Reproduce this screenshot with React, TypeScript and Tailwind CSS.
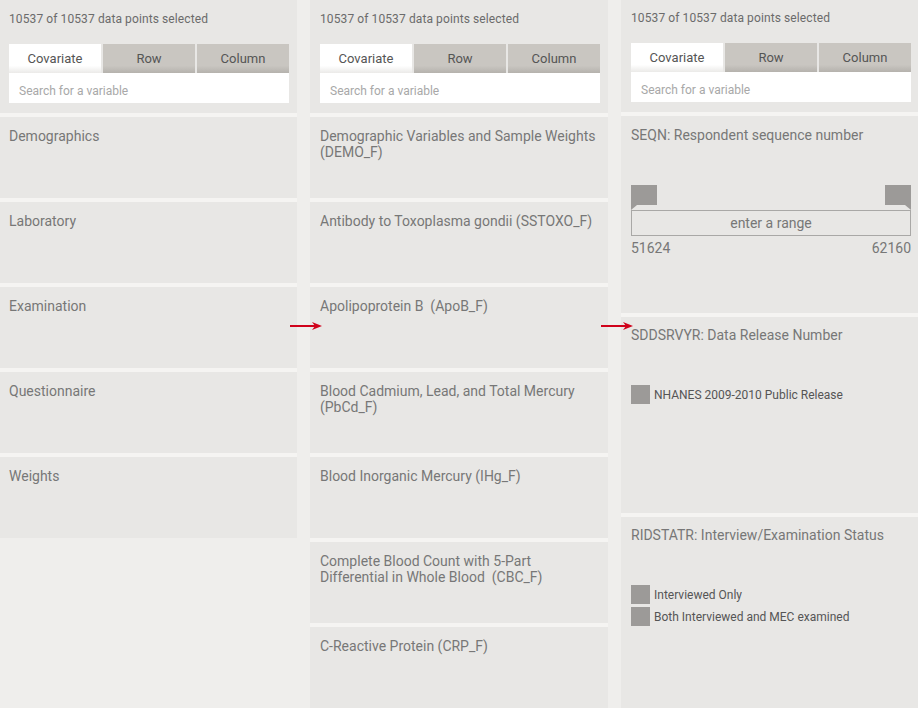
import React from 'react';

const font = { fontFamily: 'Roboto, "Liberation Sans", sans-serif' };

function Header({ short, pad = 'pl-[10px] pr-[8px]' }: { short?: boolean; pad?: string }) {
  return (
    <div className={`bg-[#e8e7e5] ${pad} ${short ? 'h-[112px] pt-[11px]' : 'h-[113px] pt-[12px]'}`}>
      <div className="text-[12px] leading-[14px] text-[#6b6b6b] tracking-[0.1px]">10537 of 10537 data points selected</div>
      <div className="mt-[18px] flex gap-[2px] h-[29px]">
        <div className="flex-1 flex items-center justify-center text-[13px] text-[#555] bg-gradient-to-b from-white from-75% to-[#ebeae8]">Covariate</div>
        <div className="flex-1 flex items-center justify-center text-[13px] text-[#555] bg-gradient-to-b from-[#c9c6c1] from-75% to-[#b5b2ad]">Row</div>
        <div className="flex-1 flex items-center justify-center text-[13px] text-[#555] bg-gradient-to-b from-[#c9c6c1] from-75% to-[#b5b2ad]">Column</div>
      </div>
      <div className="bg-white h-[30px] px-[10px] pt-[11px] text-[12px] leading-[14px] text-[#a8a8a8]">Search for a variable</div>
    </div>
  );
}

function Card({
  title,
  h = 'h-[81px]',
  pad = 'pl-[10px] pr-[8px] pt-[11px]',
  children,
}: {
  title: React.ReactNode;
  h?: string;
  pad?: string;
  children?: React.ReactNode;
}) {
  return (
    <div className={`bg-[#e8e7e5] ${pad} ${h}`}>
      <div className="text-[14px] leading-[16px] text-[#777]">{title}</div>
      {children}
    </div>
  );
}

function Swatch({ label }: { label: string }) {
  return (
    <div className="flex items-center gap-[4px] h-[19px] mb-[3px]">
      <div className="w-[19px] h-[19px] bg-[#9c9a98]" />
      <span className="text-[12px] text-[#555]">{label}</span>
    </div>
  );
}

function Arrow({ left }: { left: string }) {
  return (
    <svg className={`absolute top-[321px] ${left}`} width="33" height="10" viewBox="0 0 33 10">
      <line x1="0" y1="5" x2="26" y2="5" stroke="#d0021b" strokeWidth="2" />
      <polygon points="22,1 32,5 22,9 25,5" fill="#d0021b" />
    </svg>
  );
}

export default function App() {
  const col1 = ['Demographics', 'Laboratory', 'Examination', 'Questionnaire', 'Weights'];
  const col2 = [
    <>Demographic Variables and Sample Weights<br />(DEMO_F)</>,
    'Antibody to Toxoplasma gondii (SSTOXO_F)',
    'Apolipoprotein B  (ApoB_F)',
    <>Blood Cadmium, Lead, and Total Mercury<br />(PbCd_F)</>,
    'Blood Inorganic Mercury (IHg_F)',
    <>Complete Blood Count with 5-Part<br />Differential in Whole Blood  (CBC_F)</>,
    'C-Reactive Protein (CRP_F)',
  ];

  return (
    <div style={font} className="relative w-[918px] h-[708px] overflow-hidden bg-[#efeeec]">
      <div className="grid grid-cols-[297px_298px_297px] gap-[13px] items-start">
        <div className="flex flex-col gap-[4px] bg-[#f5f4f2]">
          <Header pad="pl-[9px] pr-[8px]" />
          {col1.map((t) => (
            <Card key={t} title={t} pad="pl-[9px] pr-[8px] pt-[11px]" />
          ))}
        </div>
        <div className="flex flex-col gap-[4px] bg-[#f5f4f2]">
          <Header />
          {col2.map((t, i) => (
            <Card key={i} title={<span className="whitespace-pre">{t}</span>} h={i === 6 ? 'h-[90px]' : 'h-[81px]'} />
          ))}
        </div>
        <div className="flex flex-col gap-[4px] bg-[#f5f4f2]">
          <Header short pad="pl-[10px] pr-[7px]" />
          <Card title="SEQN: Respondent sequence number" h="h-[197px]" pad="pl-[10px] pr-[7px] pt-[11px]">
            <div className="mt-[42px] flex justify-between">
              <svg width="26" height="26" viewBox="0 0 26 26">
                <rect x="0" y="0" width="26" height="20" fill="#9c9a98" />
                <polygon points="0,20 6,20 0,25" fill="#9c9a98" />
              </svg>
              <svg width="26" height="26" viewBox="0 0 26 26">
                <rect x="0" y="0" width="26" height="20" fill="#9c9a98" />
                <polygon points="20,20 26,20 26,25" fill="#9c9a98" />
              </svg>
            </div>
            <div className="-mt-[1px] h-[26px] border border-[#a9a8a6] flex items-center justify-center text-[14px] text-[#777]">enter a range</div>
            <div className="mt-[3px] flex justify-between text-[14px] leading-[18px] text-[#777]">
              <span>51624</span>
              <span>62160</span>
            </div>
          </Card>
          <Card title="SDDSRVYR: Data Release Number" h="h-[196px]" pad="pl-[10px] pr-[7px] pt-[10px]">
            <div className="mt-[42px]">
              <Swatch label="NHANES 2009-2010 Public Release" />
            </div>
          </Card>
          <Card title="RIDSTATR: Interview/Examination Status" h="h-[200px]" pad="pl-[10px] pr-[7px] pt-[10px]">
            <div className="mt-[42px]">
              <Swatch label="Interviewed Only" />
              <Swatch label="Both Interviewed and MEC examined" />
            </div>
          </Card>
        </div>
      </div>
      <Arrow left="left-[290px]" />
      <Arrow left="left-[601px]" />
    </div>
  );
}
